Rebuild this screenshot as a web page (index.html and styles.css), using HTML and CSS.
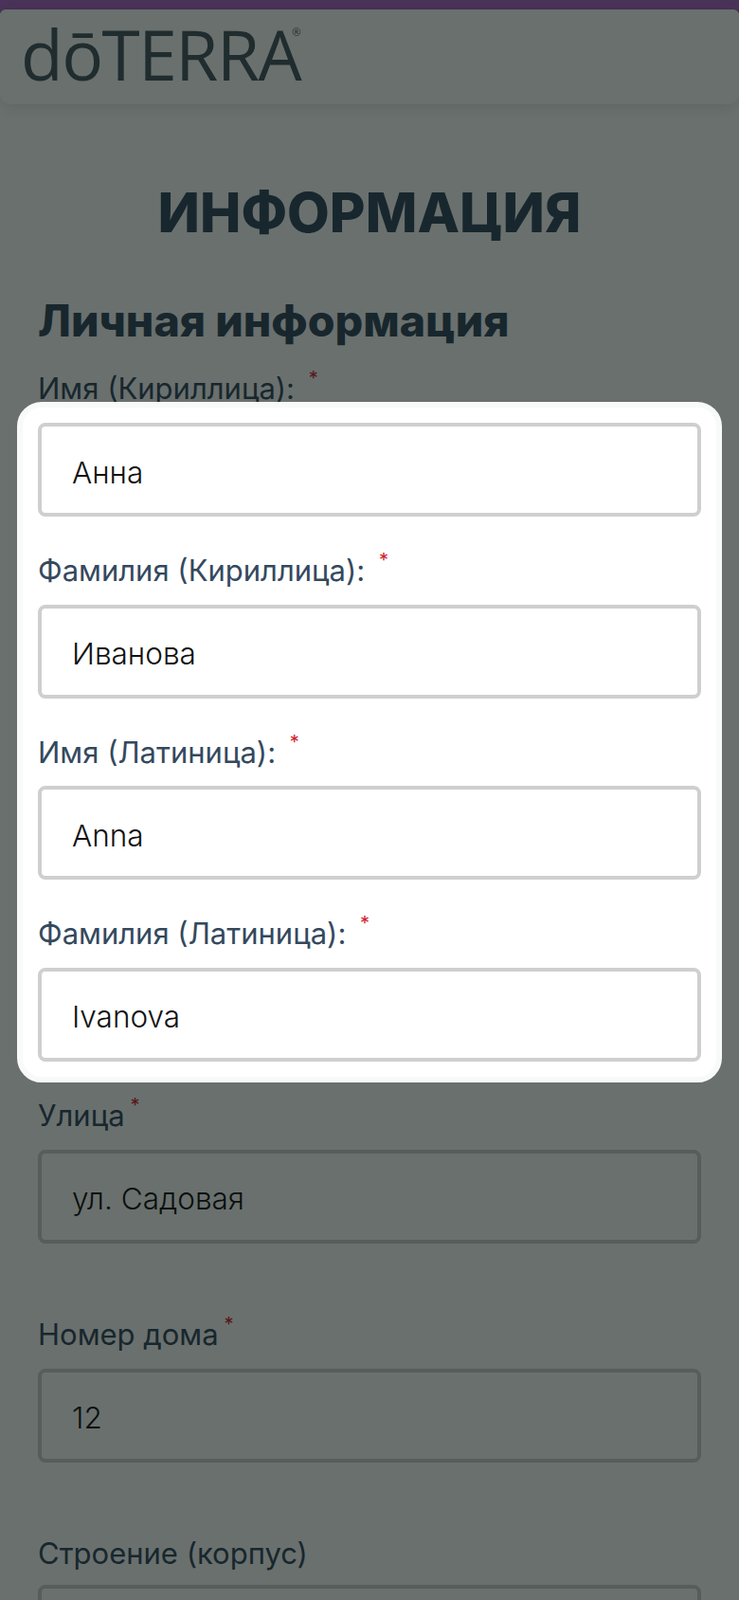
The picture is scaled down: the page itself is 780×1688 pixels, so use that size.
FILE: index.html
```html
<!DOCTYPE html>
<html lang="ru">
<head>
  <meta charset="UTF-8">
  <meta name="viewport" content="width=device-width, initial-scale=1.0">
  <title>Информация</title>
  <link rel="stylesheet" href="styles.css">
</head>
<body>
  <div class="top-bar"></div>
  <header class="site-header">
    <div class="logo">dōTERRA<sup class="logo-mark">®</sup></div>
  </header>

  <main class="content">
    <h1>ИНФОРМАЦИЯ</h1>
    <h2>Личная информация</h2>

    <label class="field-label first-label">Имя (Кириллица): <span class="req gap">*</span></label>

    <div class="highlight-card">
      <input class="field-input" type="text" value="Анна">

      <label class="field-label in-card">Фамилия (Кириллица): <span class="req gap">*</span></label>
      <input class="field-input" type="text" value="Иванова">

      <label class="field-label in-card">Имя (Латиница): <span class="req gap">*</span></label>
      <input class="field-input" type="text" value="Anna">

      <label class="field-label in-card">Фамилия (Латиница): <span class="req gap">*</span></label>
      <input class="field-input" type="text" value="Ivanova">
    </div>

    <div class="form-group street">
      <label class="field-label">Улица<span class="req gap">*</span></label>
      <input class="field-input" type="text" value="ул. Садовая">
    </div>
    <div class="form-group">
      <label class="field-label">Номер дома<span class="req gap">*</span></label>
      <input class="field-input" type="text" value="12">
    </div>
    <div class="form-group no-req">
      <label class="field-label">Строение (корпус)</label>
      <input class="field-input" type="text">
    </div>
  </main>

  <div class="overlay"></div>
</body>
</html>
```

FILE: styles.css
```css
html, body {
  height: 1688px;
  overflow: hidden;
}
body {
  margin: 0;
  font-family: "Inter", "Open Sans", sans-serif;
  background-color: #fff;
  color: #34495e;
  position: relative;
}
.top-bar {
  height: 14px;
  background-color: #af66c8;
}
.site-header {
  position: relative;
  height: 100px;
  margin-top: -4px;
  box-sizing: border-box;
  padding-left: 22px;
  border-radius: 6px 6px 12px 12px;
  background-color: #fff;
  box-shadow: 0 3px 16px rgba(0, 0, 0, 0.12);
}
.logo {
  font-family: "Open Sans", sans-serif;
  font-size: 73px;
  font-weight: 500;
  line-height: 94px;
  color: #46565f;
  letter-spacing: -1.5px;
}
.logo-mark {
  margin-left: -9px;
  font-size: 11px;
  line-height: 0;
  vertical-align: 47px;
  letter-spacing: 0;
}
.content {
  height: 1578px;
  box-sizing: border-box;
  padding: 0 40px;
  overflow: hidden;
}
h1 {
  margin: 79px 0 0;
  text-align: center;
  font-size: 58px;
  font-weight: 800;
  line-height: 70px;
  color: #34495e;
}
h2 {
  margin: 54px 0 0;
  font-size: 46.5px;
  font-weight: 800;
  line-height: 50px;
  color: #34495e;
}
.field-label {
  display: block;
  font-size: 31px;
  line-height: 36px;
  color: #34495e;
}
.first-label {
  margin-top: 29px;
}
.in-card {
  margin: 39px 0 17.5px;
}
.req {
  color: #d0202c;
  font-size: 20px;
  line-height: 0;
  vertical-align: 15px;
}
.gap {
  margin-left: 6px;
}
.field-input {
  display: block;
  width: 100%;
  height: 99px;
  box-sizing: border-box;
  padding: 5px 32px 0;
  border: 4px solid #cfcfcf;
  border-radius: 8px;
  background-color: #fff;
  font-family: inherit;
  font-size: 31.5px;
  font-weight: 300;
  color: #111;
}
.highlight-card {
  position: relative;
  z-index: 2;
  margin: -4px -22px 0;
  padding: 16px;
  border: 6px solid #f8f9f9;
  border-radius: 26px;
  background-color: #fff;
}
.form-group {
  margin-bottom: 78px;
}
.form-group .field-label {
  margin-bottom: 18px;
}
.no-req .field-label {
  margin-bottom: 15px;
}
.street {
  margin-top: 17px;
}
.overlay {
  position: absolute;
  inset: 0;
  z-index: 1;
  background-color: rgba(7, 17, 13, 0.6);
}
```
